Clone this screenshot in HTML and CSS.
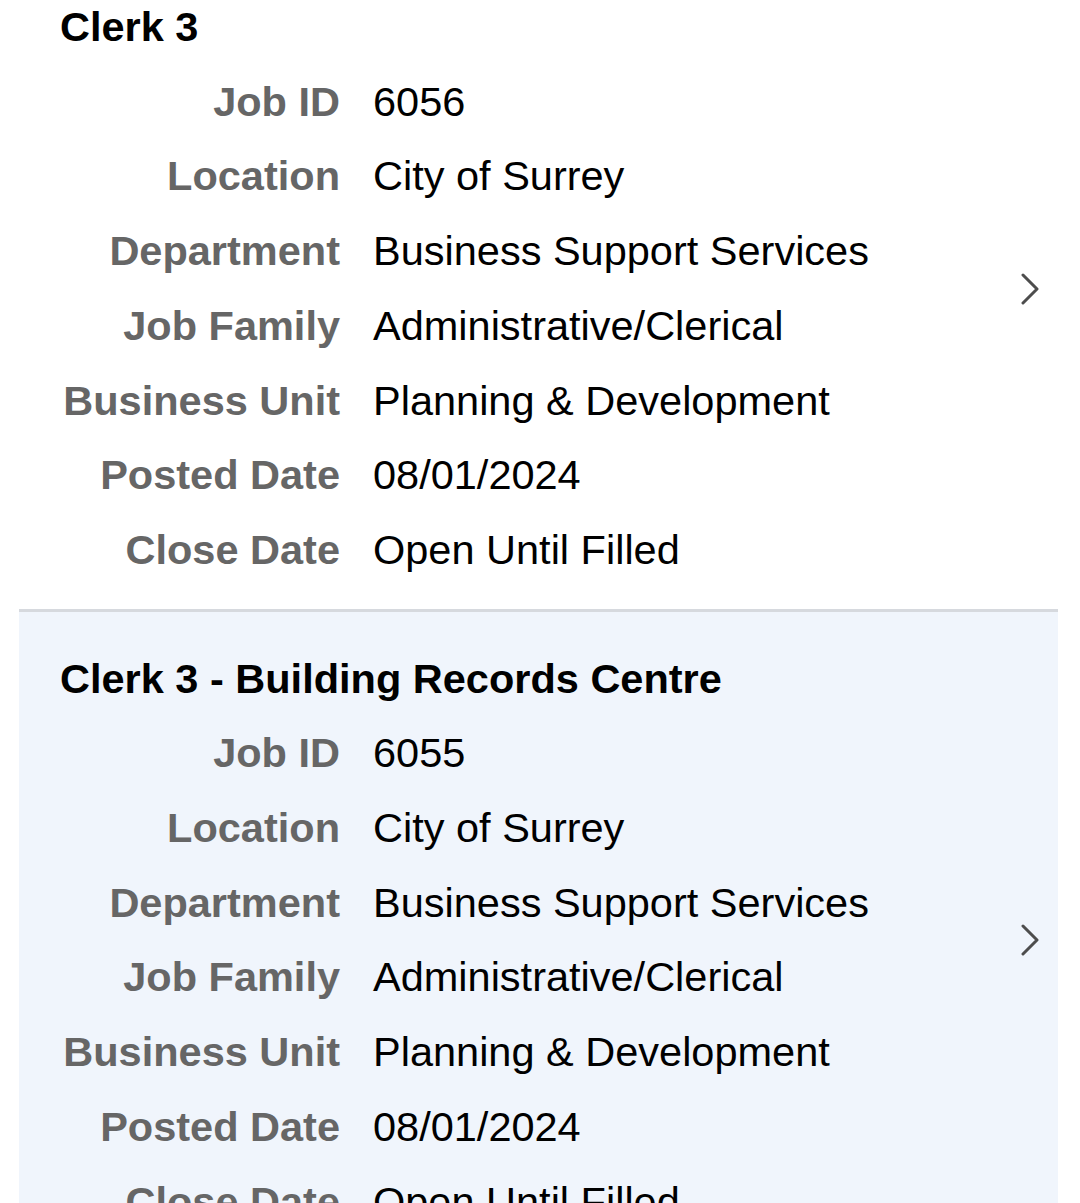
FILE: index.html
```html
<!DOCTYPE html>
<html lang="en">
<head>
    <meta charset="UTF-8">
    <meta name="viewport" content="width=device-width, initial-scale=1.0">
    <title>Job Postings</title>
    <link rel="stylesheet" href="styles.css">
</head>
<body>
    <div class="job-list">
        <div class="job-card">
            <div class="job-body">
                <div class="job-title">Clerk 3</div>
                <dl class="job-fields">
                    <dt>Job ID</dt><dd>6056</dd>
                    <dt>Location</dt><dd>City of Surrey</dd>
                    <dt>Department</dt><dd>Business Support Services</dd>
                    <dt>Job Family</dt><dd>Administrative/Clerical</dd>
                    <dt>Business Unit</dt><dd>Planning &amp; Development</dd>
                    <dt>Posted Date</dt><dd>08/01/2024</dd>
                    <dt>Close Date</dt><dd>Open Until Filled</dd>
                </dl>
            </div>
            <svg class="chevron" width="20" height="32" viewBox="0 0 20 32">
                <path d="M3 2 L17 16 L3 30" fill="none" stroke="#4d4d4d" stroke-width="3" stroke-linecap="round" stroke-linejoin="round"/>
            </svg>
        </div>

        <div class="job-card active">
            <div class="job-body">
                <div class="job-title">Clerk 3 - Building Records Centre</div>
                <dl class="job-fields">
                    <dt>Job ID</dt><dd>6055</dd>
                    <dt>Location</dt><dd>City of Surrey</dd>
                    <dt>Department</dt><dd>Business Support Services</dd>
                    <dt>Job Family</dt><dd>Administrative/Clerical</dd>
                    <dt>Business Unit</dt><dd>Planning &amp; Development</dd>
                    <dt>Posted Date</dt><dd>08/01/2024</dd>
                    <dt>Close Date</dt><dd>Open Until Filled</dd>
                </dl>
            </div>
            <svg class="chevron" width="20" height="32" viewBox="0 0 20 32">
                <path d="M3 2 L17 16 L3 30" fill="none" stroke="#4d4d4d" stroke-width="3" stroke-linecap="round" stroke-linejoin="round"/>
            </svg>
        </div>
    </div>
</body>
</html>
```

FILE: styles.css
```css
body {
    margin: 0;
    padding: 0;
    font-family: "Liberation Sans", Arial, sans-serif;
    background: #fff;
    overflow: hidden;
}

.job-list {
    margin: -41px 22px 0 19px;
}

.job-card {
    display: flex;
    align-items: center;
    padding: 30px 18px 21px 41px;
    background: #fff;
}

.job-card:first-child {
    padding-top: 31px;
}

.job-card + .job-card {
    border-top: 3px solid #d6d9de;
}

.job-card.active {
    background: #f0f5fc;
}

.job-body {
    flex: 1;
}

.job-title {
    font-size: 41.5px;
    font-weight: bold;
    line-height: 74.7px;
    color: #000;
}

.job-fields {
    display: grid;
    grid-template-columns: 280px auto;
    column-gap: 33px;
    margin: 0;
    font-size: 41.5px;
    line-height: 74.7px;
}

.job-fields dt {
    text-align: right;
    font-weight: bold;
    color: #666;
}

.job-fields dd {
    margin: 0;
    color: #000;
}

.chevron {
    flex: none;
}
```
